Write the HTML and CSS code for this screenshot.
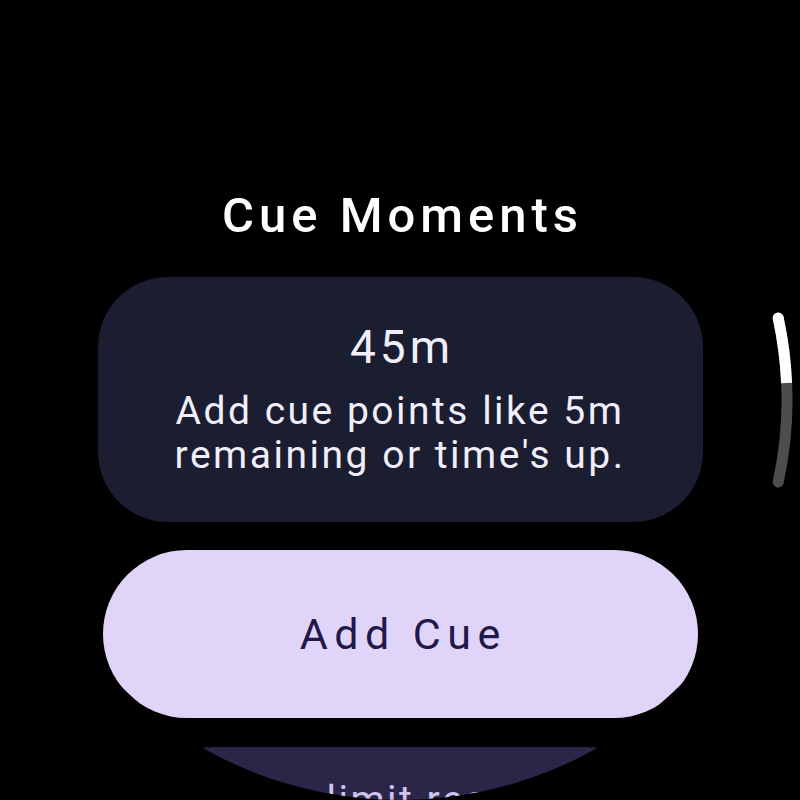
FILE: index.html
```html
<!DOCTYPE html>
<html>
<head>
<meta charset="utf-8">
<link rel="stylesheet" href="styles.css">
</head>
<body>
<div class="screen">
  <div class="list">
    <h1 class="title">Cue Moments</h1>
    <div class="card">
      <div class="card-value">45m</div>
      <div class="card-text">Add cue points like 5m remaining or time's up.</div>
    </div>
    <div class="button-primary">Add Cue</div>
    <div class="chip">Time limit reached</div>
  </div>
  <svg class="scrollbar" width="800" height="800" viewBox="0 0 800 800">
    <path d="M 778.2 318 A 387 387 0 0 1 778.2 482" fill="none" stroke="#4d4d4d" stroke-width="11" stroke-linecap="round"/>
    <path d="M 778.2 318 A 387 387 0 0 1 786.6 383" fill="none" stroke="#ffffff" stroke-width="11" stroke-linecap="butt"/>
    <circle cx="778.2" cy="318" r="5.5" fill="#ffffff"/>
  </svg>
</div>
</body>
</html>
```
FILE: styles.css
```css
html, body {
  margin: 0;
  padding: 0;
  background: #000;
}
body {
  width: 800px;
  height: 800px;
  overflow: hidden;
  font-family: Roboto, "Noto Sans", sans-serif;
}
.screen {
  position: relative;
  width: 800px;
  height: 800px;
  border-radius: 50%;
  overflow: hidden;
  background: #000;
}
.list {
  display: flex;
  flex-direction: column;
  align-items: center;
  padding-top: 186px;
}
.title {
  margin: 0;
  color: #fff;
  font-size: 49px;
  font-weight: 500;
  line-height: 60px;
  letter-spacing: 5px;
  text-indent: 5px;
}
.card {
  margin-top: 31px;
  width: 605px;
  height: 245px;
  box-sizing: border-box;
  border-radius: 70px;
  background: #1b1d31;
  display: flex;
  flex-direction: column;
  align-items: center;
  padding: 40px 40px 0;
  color: #f0eff9;
  text-align: center;
}
.card-value {
  font-size: 46px;
  line-height: 60px;
  letter-spacing: 4px;
  text-indent: 4px;
}
.card-text {
  margin-top: 12px;
  font-size: 39px;
  line-height: 44px;
  letter-spacing: 2.5px;
}
.button-primary {
  margin-top: 28px;
  width: 595px;
  height: 168px;
  border-radius: 84px;
  background: #e0d5f8;
  color: #21184b;
  display: flex;
  align-items: center;
  justify-content: center;
  font-size: 43px;
  font-weight: 400;
  letter-spacing: 6.5px;
  text-indent: 6.5px;
}
.chip {
  margin-top: 29px;
  width: 540px;
  height: 168px;
  border-radius: 84px;
  background: #2b2648;
  color: #cdc3ee;
  display: flex;
  align-items: center;
  justify-content: center;
  font-size: 39px;
  letter-spacing: 2.5px;
  box-sizing: border-box;
  padding-bottom: 62px;
}
.scrollbar {
  position: absolute;
  left: 0;
  top: 0;
  pointer-events: none;
}
```
